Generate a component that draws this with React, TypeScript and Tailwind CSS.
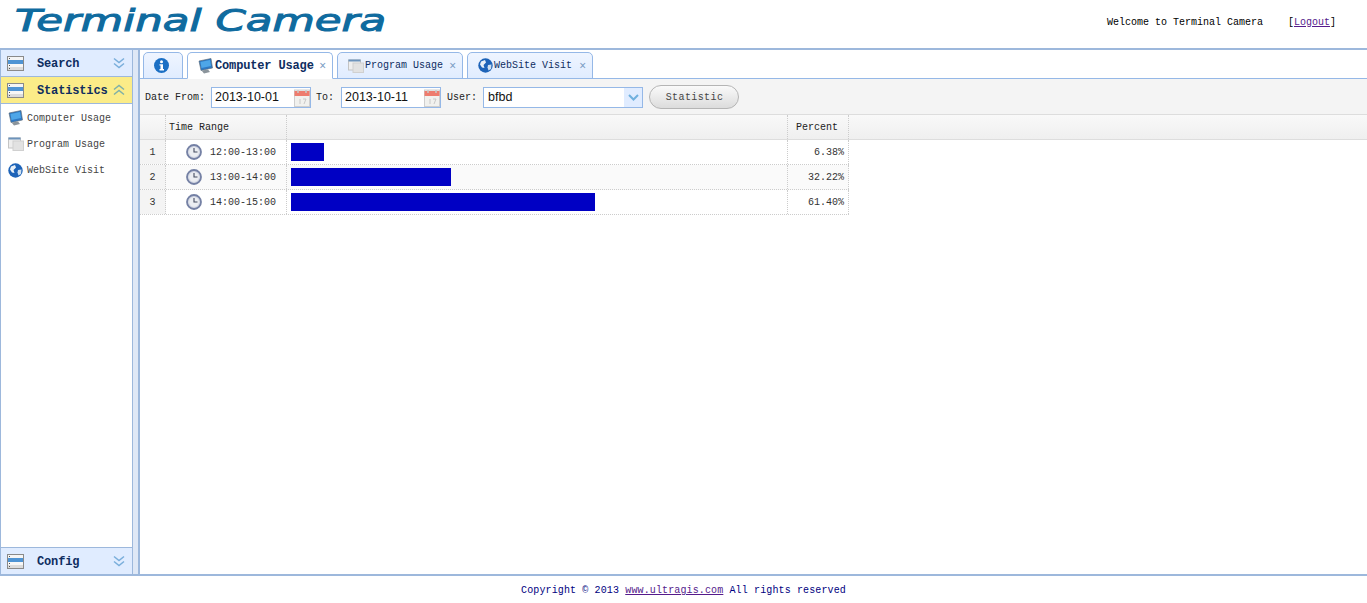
import type { ReactNode } from "react"

const mono = "font-['Liberation_Mono',monospace]"

function StackIcon() {
  return (
    <svg width="17" height="15" viewBox="0 0 17 15" className="shrink-0">
      <rect x="0.5" y="0.5" width="16" height="14" fill="#e8e8e8" stroke="#8a8a8a" />
      <rect x="1" y="1" width="15" height="3" fill="#f5f5f5" />
      <rect x="1" y="4" width="15" height="4" fill="#4f94d4" />
      <rect x="1" y="8" width="15" height="3" fill="#f7f7f7" />
      <rect x="1" y="11" width="15" height="3" fill="#dcdcdc" />
      <path d="M2 2.5h1M2 9.5h1M2 12.5h1" stroke="#555" />
    </svg>
  )
}

function Chevrons({ up }: { up?: boolean }) {
  return (
    <svg width="12" height="12" viewBox="0 0 12 12" className={up ? "shrink-0 rotate-180" : "shrink-0"}>
      <path d="M1 1.5 6 5.5 11 1.5M1 6.5 6 10.5 11 6.5" fill="none" stroke={up ? "#7fb0a8" : "#79aedb"} strokeWidth="1.5" />
    </svg>
  )
}

function ComputerIcon() {
  return (
    <svg width="16" height="16" viewBox="0 0 16 16" className="shrink-0">
      <path d="M1 3 13 0.5 14.5 10 3 12.5Z" fill="#2f79c4" stroke="#59656f" strokeWidth="0.6" />
      <path d="M2.5 4 12 2 13 8 3.5 10Z" fill="#4ea6e8" />
      <path d="M3.5 12.5 10 11.5 12 14 6 15.5Z" fill="#8b949b" />
    </svg>
  )
}

function WindowIcon() {
  return (
    <svg width="16" height="14" viewBox="0 0 16 14" className="shrink-0">
      <rect x="0.5" y="1" width="12" height="10" fill="#eeeeee" stroke="#c4c4c4" />
      <rect x="0.5" y="0.5" width="12" height="2" fill="#6d93bb" />
      <rect x="5" y="4" width="10.5" height="9.5" fill="#e2e2e2" stroke="#d0d0d0" />
    </svg>
  )
}

function GlobeIcon() {
  return (
    <svg width="15" height="15" viewBox="0 0 15 15" className="shrink-0">
      <circle cx="7.5" cy="7.5" r="7.2" fill="#1d63b8" />
      <path d="M3 3.5 7 2 8 4.5 5.5 7 6.5 10 4 9.5 2 6.5Z" fill="#e8f0f8" />
      <path d="M10 7 13.5 6.5 13 11 10.5 12.5 9.5 9.5Z" fill="#cfe0f0" />
    </svg>
  )
}

function ClockIcon() {
  return (
    <svg width="16" height="16" viewBox="0 0 16 16" className="shrink-0">
      <circle cx="8" cy="8" r="7" fill="#d5d9e4" stroke="#7480a4" strokeWidth="1.8" />
      <circle cx="8" cy="8" r="4.8" fill="#eceef2" />
      <path d="M8 4V8H11.5" fill="none" stroke="#444c60" strokeWidth="1.1" />
    </svg>
  )
}

function CalendarIcon() {
  return (
    <svg width="16" height="18" viewBox="0 0 16 18" className="shrink-0">
      <rect x="0.5" y="1" width="15" height="16.5" fill="#f1f1ee" stroke="#cfcfcf" />
      <rect x="0.5" y="2" width="15" height="5" fill="#ee7c6e" />
      <path d="M4 1v3M12 1v3" stroke="#c9c9c9" strokeWidth="1.5" />
      <path d="M6 10v5M9 10h3l-2 5" fill="none" stroke="#c8c8c8" />
    </svg>
  )
}

function InfoIcon() {
  return (
    <svg width="15" height="15" viewBox="0 0 15 15">
      <circle cx="7.5" cy="7.5" r="7.5" fill="#1b6fc4" />
      <circle cx="7.5" cy="3.8" r="1.5" fill="#fff" />
      <path d="M5.5 6.2H9V11H10V12.4H5.5V11H6.5V7.6H5.5Z" fill="#fff" />
    </svg>
  )
}

function AccordionHead({ label, up, active }: { label: string; up?: boolean; active?: boolean }) {
  return (
    <div
      className={`flex items-center pl-[6px] pr-[7px] h-[26px] ${active ? "bg-[#fbec88]" : "bg-[#e0ecff]"}`}
    >
      <StackIcon />
      <span className={`${mono} ml-[13px] flex-1 pt-[2px] text-[12px] font-bold tracking-[-0.15px] text-[#0e2d5f]`}>{label}</span>
      <Chevrons up={up} />
    </div>
  )
}

function NavItem({ icon, label }: { icon: ReactNode; label: string }) {
  return (
    <div className="flex h-[26px] items-center pl-[7px]">
      <span className="flex w-[19px] shrink-0">{icon}</span>
      <span className={`${mono} text-[10px] text-[#444]`}>{label}</span>
    </div>
  )
}

function Tab({
  icon,
  label,
  width,
  active,
}: {
  icon: ReactNode
  label: string
  width: string
  active?: boolean
}) {
  return (
    <div
      className={`${width} flex h-[27px] items-center rounded-t-[5px] border border-[#95b8e7] pl-[10px] ${
        active ? "border-b-white bg-white" : "bg-gradient-to-b from-[#eff5ff] to-[#e0ecff]"
      }`}
    >
      {icon}
      <span
        className={`${mono} ml-[1px] flex-1 ${
          active ? "text-[12px] font-bold tracking-[-0.15px] text-[#0e2d5f]" : "text-[10px] text-[#0e2d5f]"
        }`}
      >
        {label}
      </span>
      <span className="mr-[6px] text-[12px] leading-none text-[#7c9cc4]">×</span>
    </div>
  )
}

function DateBox({ value }: { value: string }) {
  return (
    <div className="flex h-[21px] w-[100px] items-center justify-between border border-[#95b8e7] bg-white pl-[3px]">
      <span className="font-['Liberation_Sans',sans-serif] text-[12.5px] text-[#111]">{value}</span>
      <CalendarIcon />
    </div>
  )
}

const rows = [
  { n: 1, range: "12:00-13:00", bar: "w-[33px]", pct: "6.38%" },
  { n: 2, range: "13:00-14:00", bar: "w-[160px]", pct: "32.22%" },
  { n: 3, range: "14:00-15:00", bar: "w-[304px]", pct: "61.40%" },
]

export default function App() {
  return (
    <div className="flex h-screen w-full flex-col overflow-hidden bg-white">
      <header className="flex h-[48px] shrink-0 items-center justify-between">
        <span className="mb-[6px] ml-[15px] origin-left scale-x-[1.45] font-['DejaVu_Sans',sans-serif] text-[30px] leading-none text-[#0f6b9f] italic [-webkit-text-stroke:1px_#0f6b9f]">
          Terminal Camera
        </span>
        <div className={`${mono} mr-[31px] mb-[4px] flex text-[10px] text-black`}>
          <span>Welcome to Terminal Camera</span>
          <span className="ml-[25px]">
            [<a className="text-[#551a8b] underline">Logout</a>]
          </span>
        </div>
      </header>

      <main className="flex min-h-0 flex-1 border-y-2 border-[#9db8dc]">
        <aside className="flex w-[133px] shrink-0 flex-col border-x border-[#9db8dc] bg-white">
          <div className="border-b border-[#9db8dc]">
            <AccordionHead label="Search" />
          </div>
          <div className="border-b border-[#9db8dc]">
            <AccordionHead label="Statistics" up active />
          </div>
          <nav className="flex-1 pt-[1px]">
            <NavItem icon={<ComputerIcon />} label="Computer Usage" />
            <NavItem icon={<WindowIcon />} label="Program Usage" />
            <NavItem icon={<GlobeIcon />} label="WebSite Visit" />
          </nav>
          <div className="border-t border-[#9db8dc]">
            <AccordionHead label="Config" />
          </div>
        </aside>
        <div className="w-[5px] shrink-0 bg-[#dfe8f6]" />

        <section className="flex min-w-0 flex-1 flex-col border-l-2 border-[#9db8dc]">
          <div className="flex h-[29px] shrink-0 items-end gap-[4px] border-b border-[#95b8e7] pl-[3px]">
            <div className="-mb-[1px] flex h-[27px] w-[40px] items-center justify-center rounded-t-[5px] border border-[#95b8e7] bg-gradient-to-b from-[#eff5ff] to-[#e0ecff] pr-[3px]">
              <InfoIcon />
            </div>
            <div className="-mb-[1px]">
              <Tab icon={<ComputerIcon />} label="Computer Usage" width="w-[146px]" active />
            </div>
            <div className="-mb-[1px]">
              <Tab icon={<WindowIcon />} label="Program Usage" width="w-[126px]" />
            </div>
            <div className="-mb-[1px]">
              <Tab icon={<GlobeIcon />} label="WebSite Visit" width="w-[126px]" />
            </div>
          </div>

          <div className={`${mono} flex h-[36px] shrink-0 items-center border-b border-[#dddddd] bg-[#f4f4f4] pt-[2px] pl-[5px] text-[10px] text-[#222]`}>
            <span className="w-[66px]">Date From:</span>
            <DateBox value="2013-10-01" />
            <span className="ml-[5px] w-[25px]">To:</span>
            <DateBox value="2013-10-11" />
            <span className="ml-[6px] w-[36px]">User:</span>
            <div className="flex h-[21px] w-[160px] items-center justify-between border border-[#95b8e7] bg-white pl-[4px]">
              <span className="font-['Liberation_Sans',sans-serif] text-[12.5px] text-[#111]">bfbd</span>
              <span className="flex h-full w-[18px] items-center justify-center bg-[#e0ecff]">
                <svg width="11" height="7" viewBox="0 0 11 7">
                  <path d="M1 1 5.5 5.5 10 1" fill="none" stroke="#6fb0de" strokeWidth="2" />
                </svg>
              </span>
            </div>
            <button className="mb-[2px] ml-[6px] flex h-[24px] w-[90px] items-center justify-center rounded-full border border-[#b5b5b5] bg-gradient-to-b from-[#fafafa] to-[#dcdcdc] pt-[1px] pl-[1px] tracking-[0.4px] text-[#444]">
              Statistic
            </button>
          </div>

          <div className={`${mono} flex h-[25px] shrink-0 items-stretch border-b border-[#dddddd] bg-gradient-to-b from-[#f9f9f9] to-[#efefef] text-[10px] text-[#222]`}>
            <div className="w-[26px] border-r border-dotted border-[#ccc]" />
            <div className="flex w-[121px] items-center border-r border-dotted border-[#ccc] pl-[3px]">Time Range</div>
            <div className="w-[501px] border-r border-dotted border-[#ccc]" />
            <div className="flex w-[61px] items-center justify-center border-r border-dotted border-[#ccc] pr-[2px]">Percent</div>
          </div>

          {rows.map((r) => (
            <div
              key={r.n}
              className={`flex h-[25px] w-[709px] shrink-0 items-stretch border-b border-dotted border-[#ccc] text-[#333] ${
                r.n === 2 ? "bg-[#fafafa]" : "bg-white"
              }`}
            >
              <div className={`${mono} flex w-[26px] items-center justify-center border-r border-dotted border-[#ccc] bg-[#f4f4f4] text-[10px]`}>
                {r.n}
              </div>
              <div className={`${mono} flex w-[121px] items-center justify-end gap-[8px] border-r border-dotted border-[#ccc] pr-[10px] text-[10px]`}>
                <ClockIcon />
                <span className="pt-[1px]">{r.range}</span>
              </div>
              <div className="flex w-[501px] items-center border-r border-dotted border-[#ccc] pl-[4px]">
                <div className={`${r.bar} h-[18px] bg-[#0000c4]`} />
              </div>
              <div className={`${mono} flex w-[61px] items-center justify-end border-r border-dotted border-[#ccc] pr-[4px] text-[10px]`}>
                {r.pct}
              </div>
            </div>
          ))}
        </section>
      </main>

      <footer className={`${mono} flex h-[27px] shrink-0 items-center justify-center pt-[2px] text-[10px] tracking-[0.13px] text-[#000080]`}>
        <span>
          Copyright © 2013 <a className="text-[#551a8b] underline">www.ultragis.com</a> All rights reserved
        </span>
      </footer>
    </div>
  )
}
